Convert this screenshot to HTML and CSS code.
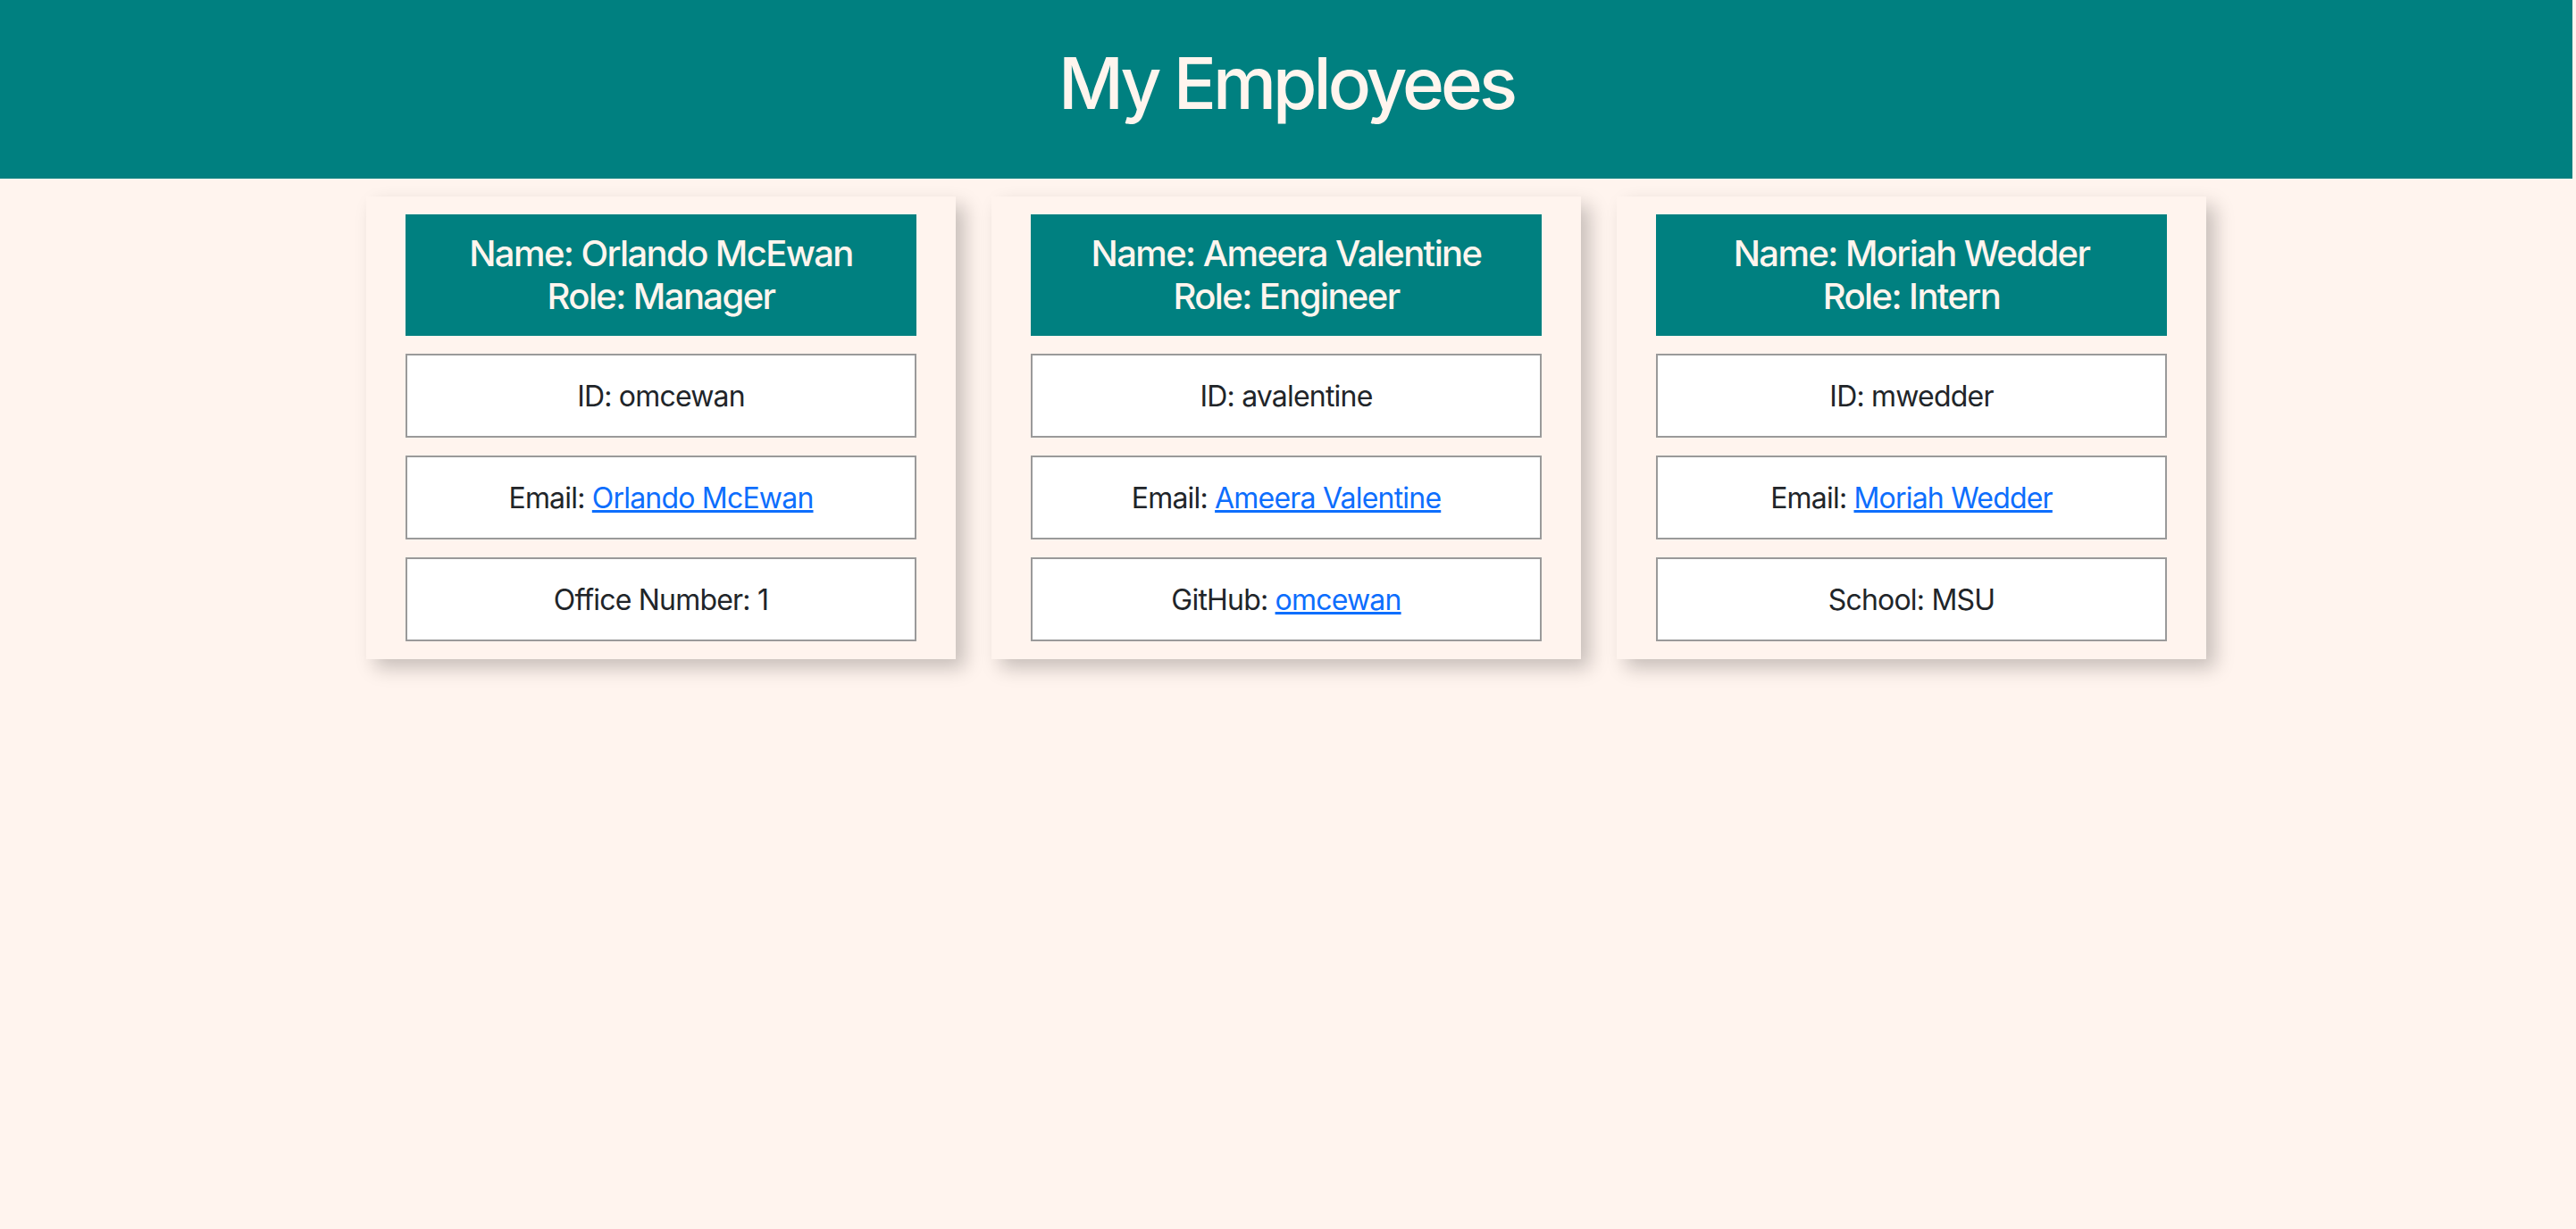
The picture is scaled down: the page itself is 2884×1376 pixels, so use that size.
FILE: index.html
```html
<!DOCTYPE html>
<html lang="en">
<head>
<meta charset="utf-8">
<title>My Employees</title>
<link rel="stylesheet" href="styles.css">
</head>
<body>
<header class="banner">
  <h1 class="banner-title">My Employees</h1>
</header>
<main class="team">
  <section class="card">
    <h5 class="card-head">Name: Orlando McEwan<br>Role: Manager</h5>
    <div class="field">ID: omcewan</div>
    <div class="field">Email: <a href="#">Orlando McEwan</a></div>
    <div class="field">Office Number: 1</div>
  </section>
  <section class="card">
    <h5 class="card-head">Name: Ameera Valentine<br>Role: Engineer</h5>
    <div class="field">ID: avalentine</div>
    <div class="field">Email: <a href="#">Ameera Valentine</a></div>
    <div class="field">GitHub: <a href="#">omcewan</a></div>
  </section>
  <section class="card">
    <h5 class="card-head">Name: Moriah Wedder<br>Role: Intern</h5>
    <div class="field">ID: mwedder</div>
    <div class="field">Email: <a href="#">Moriah Wedder</a></div>
    <div class="field">School: MSU</div>
  </section>
</main>
</body>
</html>
```

FILE: styles.css
```css
* { box-sizing: border-box; }

html, body {
  margin: 0;
  padding: 0;
}

body {
  background: #fff4ee;
  font-family: Inter, "Liberation Sans", sans-serif;
  font-size: 32px;
  line-height: 1.5;
  color: #212529;
  min-height: 1376px;
}

.banner {
  width: calc(100% - 4px);
  height: 200px;
  background: #008080;
  padding-top: 45px;
  text-align: center;
}

.banner-title {
  margin: 0;
  font-size: 80px;
  font-weight: 500;
  line-height: 96px;
  letter-spacing: -0.05em;
  color: #fff5ee;
}

.team {
  display: flex;
  justify-content: center;
  gap: 40px;
  padding-top: 20px;
  padding-right: 4px;
}

.card {
  width: 660px;
  padding: 20px 44px;
  display: flex;
  flex-direction: column;
  gap: 20px;
  background: #fff4ee;
  box-shadow: 10px 10px 20px rgba(0, 0, 0, 0.22);
}

.card-head {
  margin: 0;
  background: #008080;
  color: #fff5ee;
  font-size: 40px;
  font-weight: 500;
  letter-spacing: -0.04em;
  text-align: center;
  padding: 20px 0;
  line-height: 48px;
}

.field {
  background: #ffffff;
  border: 2px solid #9a9a9a;
  padding: 22px 0 20px;
  text-align: center;
  line-height: 48px;
  letter-spacing: -0.025em;
}

.field a {
  color: #0d6efd;
  text-decoration: underline;
}
```
